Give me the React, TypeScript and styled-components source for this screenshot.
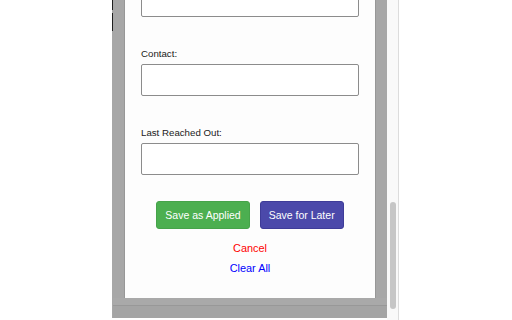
import React from 'react';
import styled, { createGlobalStyle } from 'styled-components';

const GlobalStyle = createGlobalStyle`
  html, body {
    margin: 0;
    padding: 0;
    background: #ffffff;
    font-family: "Liberation Sans", Arial, sans-serif;
  }
`;

// Whole window: white page with the popup frame and its scrollbar
const Page = styled.div`
  display: flex;
  width: 512px;
  height: 320px;
  overflow: hidden;
  background: #ffffff;
`;

const Gutter = styled.div<{ $width: number }>`
  flex: 0 0 ${(p) => p.$width}px;
`;

const EdgeLine = styled.div`
  flex: 0 0 1px;
  height: 318px;
  background: linear-gradient(
    to bottom,
    #1e1e1e 0 10px,
    #a7a7a7 10px 13px,
    #1e1e1e 13px 31px,
    #a7a7a7 31px
  );
`;

const Frame = styled.div`
  flex: 0 0 274px;
  display: flex;
  flex-direction: column;
  height: 318px;
  background: #a7a7a7;
`;

const Viewport = styled.div`
  height: 298px;
  overflow: hidden;
  padding: 0 11px;
`;

const BottomStrip = styled.div`
  flex: 1;
  background: linear-gradient(
    to bottom,
    #a9a9a9 0 7px,
    #989898 7px 8px,
    #a4a4a4 8px
  );
`;

// The card is scrolled down, so its top edge sits above the window
const Card = styled.div`
  margin-top: -32px;
  background: #fdfdfd;
  border: 1px solid #979797;
  padding: 16px 16px 24px;
  display: flex;
  flex-direction: column;
`;

const Field = styled.div`
  display: flex;
  flex-direction: column;
  margin-bottom: 31px;
`;

const Label = styled.label`
  display: block;
  font-size: 9.7px;
  line-height: 12px;
  color: #1a1a1a;
  margin-bottom: 4px;
`;

const Input = styled.input`
  box-sizing: border-box;
  width: 100%;
  height: 32px;
  border: 1px solid #8c8c8c;
  border-radius: 2px;
  background: #ffffff;
  padding: 0 6px;
  font-family: inherit;
  font-size: 11px;
`;

const ButtonRow = styled.div`
  display: flex;
  justify-content: center;
  gap: 10px;
  margin-top: -5px;
`;

const ActionButton = styled.button<{ $tone: 'green' | 'indigo' }>`
  height: 28px;
  padding: 0 8px;
  border-radius: 3px;
  border: 1px solid ${(p) => (p.$tone === 'green' ? '#46a34a' : '#3e3c98')};
  background: ${(p) => (p.$tone === 'green' ? '#4caf50' : '#4b49aa')};
  color: #ffffff;
  font-family: inherit;
  font-size: 10.5px;
  cursor: pointer;
`;

const LinkButton = styled.button<{ $color: string; $gap: number }>`
  align-self: center;
  margin-top: ${(p) => p.$gap}px;
  padding: 0;
  border: none;
  background: none;
  color: ${(p) => p.$color};
  font-family: inherit;
  font-size: 10.9px;
  line-height: 13px;
  cursor: pointer;
`;

const Track = styled.div`
  flex: 0 0 11px;
  height: 320px;
  background: #f9f9f9;
  box-sizing: border-box;
  padding: 202px 2px 0 3px;
`;

const Thumb = styled.div`
  width: 6px;
  height: 107px;
  border-radius: 3px;
  background: #c6c6c6;
`;

const Divider = styled.div`
  flex: 0 0 1px;
  height: 320px;
  background: #dcdcdc;
`;

function App() {
  return (
    <>
      <GlobalStyle />
      <Page>
        <Gutter $width={112} />
        <EdgeLine />
        <Frame>
          <Viewport>
            <Card>
              <Field>
                <Input id="company" type="text" aria-label="Company" />
              </Field>
              <Field>
                <Label htmlFor="contact">Contact:</Label>
                <Input id="contact" type="text" />
              </Field>
              <Field>
                <Label htmlFor="lastReached">Last Reached Out:</Label>
                <Input id="lastReached" type="text" />
              </Field>
              <ButtonRow>
                <ActionButton $tone="green">Save as Applied</ActionButton>
                <ActionButton $tone="indigo">Save for Later</ActionButton>
              </ButtonRow>
              <LinkButton $color="#ff0000" $gap={12.5}>Cancel</LinkButton>
              <LinkButton $color="#0000ff" $gap={7}>Clear All</LinkButton>
            </Card>
          </Viewport>
          <BottomStrip />
        </Frame>
        <Track>
          <Thumb />
        </Track>
        <Divider />
      </Page>
    </>
  );
}

export default App;
